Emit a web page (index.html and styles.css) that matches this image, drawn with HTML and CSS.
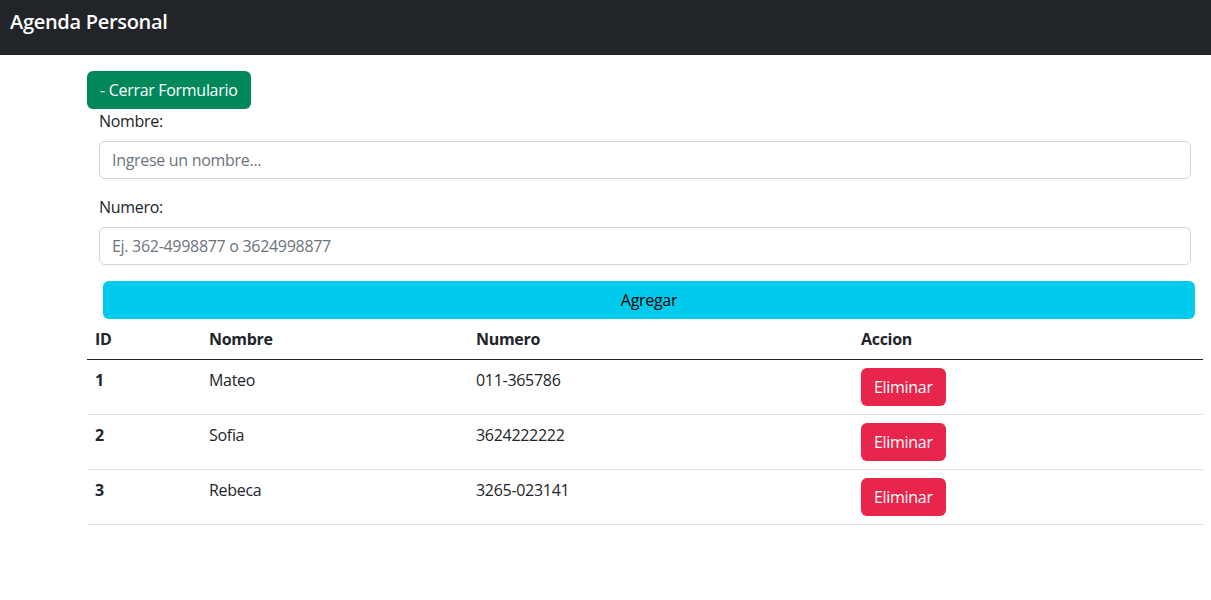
FILE: index.html
```html
<!DOCTYPE html>
<html lang="es">
<head>
<meta charset="utf-8">
<title>Agenda Personal</title>
<link rel="stylesheet" href="styles.css">
</head>
<body>
<nav class="navbar">
  <span class="brand">Agenda Personal</span>
</nav>
<main class="container">
  <button class="btn btn-success">- Cerrar Formulario</button>
  <form class="form">
    <label class="label" for="nombre">Nombre:</label>
    <input class="input" id="nombre" type="text" placeholder="Ingrese un nombre...">
    <label class="label" for="numero">Numero:</label>
    <input class="input" id="numero" type="text" placeholder="Ej. 362-4998877 o 3624998877">
    <button type="button" class="btn btn-info">Agregar</button>
  </form>
  <table class="table">
    <thead>
      <tr>
        <th class="c-id">ID</th>
        <th class="c-nombre">Nombre</th>
        <th class="c-numero">Numero</th>
        <th class="c-accion">Accion</th>
      </tr>
    </thead>
    <tbody>
      <tr>
        <th>1</th><td>Mateo</td><td>011-365786</td>
        <td><button class="btn btn-danger">Eliminar</button></td>
      </tr>
      <tr>
        <th>2</th><td>Sofia</td><td>3624222222</td>
        <td><button class="btn btn-danger">Eliminar</button></td>
      </tr>
      <tr>
        <th>3</th><td>Rebeca</td><td>3265-023141</td>
        <td><button class="btn btn-danger">Eliminar</button></td>
      </tr>
    </tbody>
  </table>
</main>
</body>
</html>
```

FILE: styles.css
```css
* { box-sizing: border-box; }
body {
  margin: 0;
  font-family: "Open Sans", "Noto Sans", sans-serif;
  font-size: 16px;
  line-height: 1.5;
  letter-spacing: -0.3px;
  color: #212529;
  background: #fff;
}
.navbar {
  height: 55px;
  background: #212529;
  display: flex;
  align-items: center;
  padding: 0 10px 12px;
}
.brand {
  color: #fff;
  font-size: 20px;
  font-weight: 600;
  line-height: 30px;
}
.container {
  padding: 16px 8px 0 87px;
}
.btn {
  font-family: inherit;
  font-size: 16px;
  line-height: 24px;
  letter-spacing: -0.3px;
  padding: 6px 12px;
  border: 1px solid transparent;
  border-radius: 6px;
  cursor: pointer;
  display: inline-block;
}
.btn-success {
  background: #00875a;
  color: #fff;
}
.btn-info {
  background: #00cbec;
  color: #000;
  display: block;
  width: 100%;
  margin-left: 4px;
  margin-top: 16px;
}
.btn-danger {
  background: #e8254b;
  color: #fff;
}
.form {
  padding: 0 12px;
  display: flex;
  flex-direction: column;
}
.label {
  display: block;
  margin-bottom: 8px;
}
.input {
  display: block;
  width: 100%;
  height: 38px;
  padding: 6px 12px;
  font-family: inherit;
  font-size: 16px;
  line-height: 24px;
  letter-spacing: -0.3px;
  color: #212529;
  border: 1px solid #ced4da;
  border-radius: 6px;
}
.input + .label { margin-top: 16px; }
.input::placeholder { color: #6c757d; }
.table {
  width: 100%;
  border-collapse: collapse;
}
.table th, .table td {
  text-align: left;
  vertical-align: top;
  padding: 8px;
  border-bottom: 1px solid #dee2e6;
}
.table thead th {
  border-bottom: 1px solid #212529;
}
.table th { font-weight: 700; }
.c-id { width: 114px; }
.c-nombre { width: 267px; }
.c-numero { width: 385px; }
.c-accion { width: 350px; }
```
